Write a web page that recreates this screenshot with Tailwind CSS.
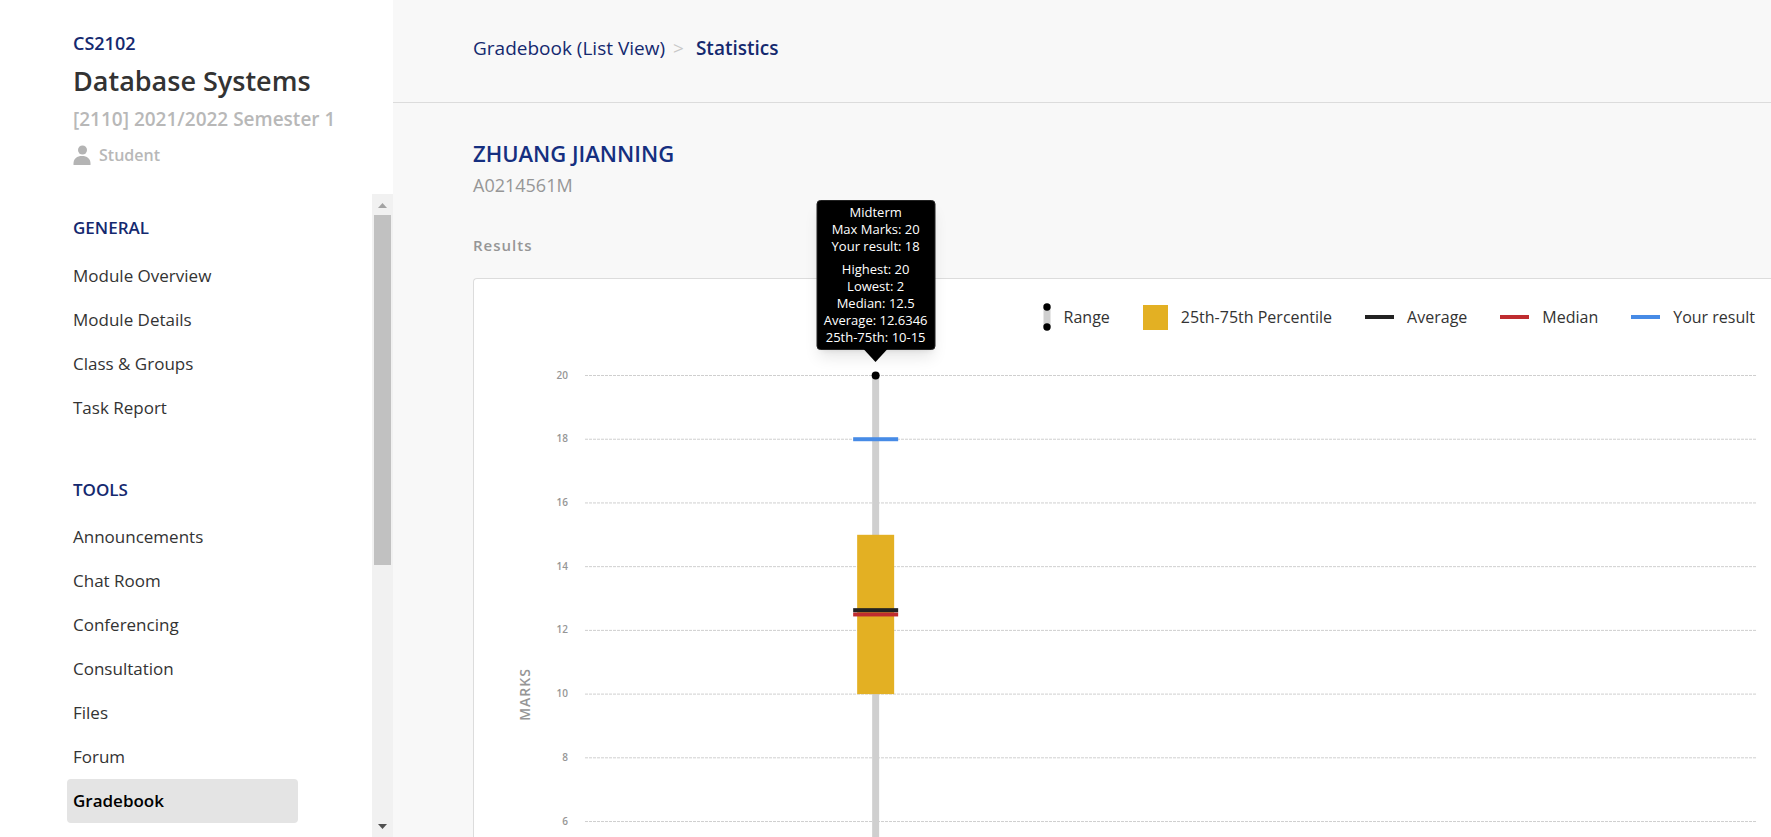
<!DOCTYPE html>
<html lang="en">
<head>
<meta charset="utf-8">
<title>Gradebook Statistics</title>
<script src="https://cdn.jsdelivr.net/npm/@tailwindcss/browser@4"></script>
</head>
<body class="flex h-screen overflow-hidden bg-[#f8f8f8] font-['Open_Sans',sans-serif] text-[#333]">
<aside class="flex w-[393px] shrink-0 flex-col bg-white">
  <header class="flex h-[194px] shrink-0 flex-col pt-[29px] pl-[73px] font-semibold">
    <p class="text-[18px] leading-7 text-[#14296f]">CS2102</p>
    <h1 class="text-[27px] leading-12">Database Systems</h1>
    <p class="text-[19px] leading-7 text-[#b8b8b8]">[2110] 2021/2022 Semester 1</p>
    <p class="mt-2 flex items-center gap-2 text-base leading-7 text-[#b8b8b8]">
      <svg class="h-5 w-[18px]" viewBox="0 0 18 20" fill="#b4b4b4" aria-hidden="true"><circle cx="9.500" cy="5" r="4.500"/><path d="M0.500 20v-1.500c0-5 3.500-7.500 8.500-7.500s8.500 2.500 8.500 7.500V20z"/></svg>
      Student
    </p>
  </header>
  <div class="flex min-h-0 flex-1">
    <nav class="flex-1 overflow-hidden pt-5 pr-[74px] pl-[67px] text-[17px]">
      <h2 class="px-1.5 leading-7 font-semibold text-[#14296f]">GENERAL</h2>
      <ul class="mt-3 leading-11">
        <li><a href="#" class="block px-1.5">Module Overview</a></li>
        <li><a href="#" class="block px-1.5">Module Details</a></li>
        <li><a href="#" class="block px-1.5">Class &amp; Groups</a></li>
        <li><a href="#" class="block px-1.5">Task Report</a></li>
      </ul>
      <h2 class="mt-[46px] px-1.5 leading-7 font-semibold text-[#14296f]">TOOLS</h2>
      <ul class="mt-[11px] leading-11">
        <li><a href="#" class="block px-1.5">Announcements</a></li>
        <li><a href="#" class="block px-1.5">Chat Room</a></li>
        <li><a href="#" class="block px-1.5">Conferencing</a></li>
        <li><a href="#" class="block px-1.5">Consultation</a></li>
        <li><a href="#" class="block px-1.5">Files</a></li>
        <li><a href="#" class="block px-1.5">Forum</a></li>
        <li><a href="#" aria-current="page" class="block w-[231px] rounded bg-[#e4e4e4] px-1.5 font-semibold text-black">Gradebook</a></li>
      </ul>
    </nav>
    <div class="flex w-[21px] flex-col items-center bg-[#f1f1f1]" aria-hidden="true">
      <svg class="h-[21px] w-[21px] shrink-0" viewBox="0 0 21 21" fill="#a3a3a3"><path d="M6 14l4.500-5 4.500 5z"/></svg>
      <div class="flex w-[17px] flex-1 flex-col"><div class="bg-[#c1c1c1]" style="height:58.200%"></div></div>
      <svg class="h-[21px] w-[21px] shrink-0" viewBox="0 0 21 21" fill="#505050"><path d="M6 8h9l-4.500 5z"/></svg>
    </div>
  </div>
</aside>
<main class="flex min-w-0 flex-1 flex-col">
  <nav class="flex h-[103px] shrink-0 items-start border-b border-[#dcdcdc] pt-[34px] pl-20 text-[19px] leading-7 text-[#14296f]" aria-label="Breadcrumb">
    <a href="#">Gradebook (List View)</a>
    <span class="mr-3 ml-2 text-[#c8c8c8]">&gt;</span>
    <span class="font-semibold" aria-current="page">Statistics</span>
  </nav>
  <div class="flex min-h-0 flex-1 flex-col pl-20">
    <h2 class="mt-[34px] text-[22px] leading-8 font-semibold text-[#152f80]">ZHUANG JIANNING</h2>
    <p class="text-[18px] leading-8 text-[#969696]">A0214561M</p>
    <h3 class="mt-7 text-[15px] leading-8 font-semibold tracking-[1px] text-[#969696]">Results</h3>
    <section class="mt-[17px] min-h-0 flex-1 rounded-tl border-t border-l border-[#dcdcdc] bg-white pr-3.5">
      <ul class="flex h-[96px] justify-end gap-[33px] pt-[22px] pr-0.5 text-base leading-8 whitespace-nowrap">
        <li class="flex h-8 items-center gap-[13px]">
          <svg class="h-7 w-2" viewBox="0 0 8 28" aria-hidden="true"><path fill="#cfcfcf" d="M0.500 4h7v20h-7z"/><circle cx="4" cy="4" r="3.700"/><circle cx="4" cy="24" r="3.700"/></svg>Range</li>
        <li class="flex h-8 items-center gap-[13px]"><span class="size-[25px] bg-[#e3b023]"></span>25th-75th Percentile</li>
        <li class="flex h-8 items-center gap-[13px]"><span class="h-1 w-[29px] bg-[#222]"></span>Average</li>
        <li class="flex h-8 items-center gap-[13px]"><span class="h-1 w-[29px] bg-[#bf2c2f]"></span>Median</li>
        <li class="flex h-8 items-center gap-[13px]"><span class="h-1 w-[29px] bg-[#478be6]"></span>Your result</li>
      </ul>
      <div class="flex">
        <div class="flex h-[638px] w-[101px] items-center justify-center"><span class="-rotate-90 text-[14px] font-semibold tracking-[1px] text-[#969696]">MARKS</span></div>
        <div class="relative -ml-8 flex-1 pl-[42px]">
          <div class="relative">
            <svg id="plot" class="block h-[680px] w-full overflow-visible" role="img" aria-label="Midterm mark distribution"></svg>
            <div class="absolute flex w-[119px] -translate-x-1/2 -translate-y-full flex-col items-center rounded border border-[#222] bg-black py-[3px] text-center text-[13px] leading-[17px] whitespace-nowrap text-white shadow-lg" style="left:24.800%;top:-25px" role="tooltip">
              <p>Midterm<br>Max Marks: 20<br>Your result: 18</p>
              <p class="mt-1.5">Highest: 20<br>Lowest: 2<br>Median: 12.5<br>Average: 12.6346<br>25th-75th: 10-15</p>
              <svg class="absolute top-full h-[13px] w-6" viewBox="0 0 24 13" aria-hidden="true"><path d="M0 0h24L12 13z"/></svg>
            </div>
          </div>
        </div>
      </div>
    </section>
  </div>
</main>
<script>
  const y = v => (20 - v) * 31.86 + 0.5;
  let s = '';
  for (let v = 20; v >= 6; v -= 2) {
    s += `<line x1="0" x2="100%" y1="${y(v)}" y2="${y(v)}" stroke="#cfcfcf" stroke-dasharray="3 1"/>` +
      `<text x="-17" y="${y(v) + 3}" text-anchor="end" font-size="10" font-weight="600" fill="#969696">${v}</text>`;
  }
  s += '<svg x="24.8%" overflow="visible">' +
    `<rect x="-3.5" y="${y(20)}" width="7" height="${y(2) - y(20)}" fill="#cfcfcf"/>` +
    `<circle cy="${y(20)}" r="4"/><circle cy="${y(2)}" r="4"/>` +
    `<rect x="-18.5" y="${y(15)}" width="37" height="${y(10) - y(15)}" fill="#e3b023"/>`;
  for (const [v, c] of [[18, '#478be6'], [12.5, '#bf2c2f'], [12.6346, '#222']])
    s += `<rect x="-22.5" y="${y(v) - 2}" width="45" height="4" fill="${c}"/>`;
  document.getElementById('plot').innerHTML = s + '</svg>';
</script>
</body>
</html>
